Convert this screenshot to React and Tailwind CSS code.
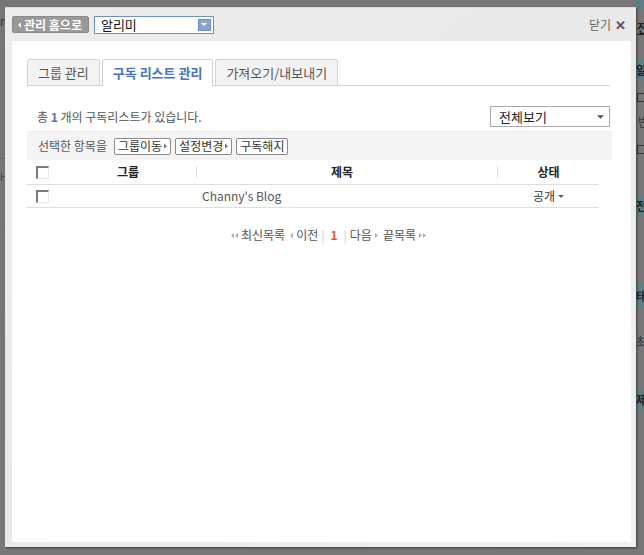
import React from 'react'

const font = { fontFamily: '"Noto Sans CJK KR", "Noto Sans", sans-serif' }

function Tri({ dir = 'right', className = '' }) {
  // tiny arrow used in buttons and pagination
  const d = dir === 'right' ? 'M0 0 L4 3.5 L0 7 Z' : dir === 'left' ? 'M4 0 L0 3.5 L4 7 Z' : 'M0 0 L8 0 L4 4 Z'
  const vb = dir === 'down' ? '0 0 8 4' : '0 0 4 7'
  return (
    <svg viewBox={vb} className={className} fill="currentColor">
      <path d={d} />
    </svg>
  )
}

function Check() {
  return <span className="inline-block w-[13px] h-[13px] border border-t-[#7a7a7a] border-l-[#7a7a7a] border-r-[#e6e6e6] border-b-[#e6e6e6] border-t-2 border-l-2 bg-white" />
}

function Backdrop() {
  // page beneath the overlay, only a sliver shows
  return (
    <>
      <div className="absolute left-0 top-[12px] w-[5px] overflow-hidden text-[12px] text-[#333]">n</div>
      <div className="absolute left-0 top-[158px] w-[5px] border-t border-dotted border-[#555]" />
      <div className="absolute left-0 top-[168px] w-[5px] overflow-hidden text-[11px] text-[#444]">H</div>
      <div className="absolute right-0 top-0 w-[8px] h-[10px] bg-[#5e7e84]" />
      <div className="absolute left-[637px] top-[19px] w-[7px] overflow-hidden text-[12px] font-bold text-[#222] underline">전</div>
      <div className="absolute right-0 top-[59px] w-[8px] h-[21px] overflow-hidden bg-[#5e7e84] text-[12px] font-bold text-[#222] leading-[21px]">알</div>
      <div className="absolute left-[637px] top-[93px] w-[8px] h-[9px] border border-[#333]" />
      <div className="absolute left-[638px] top-[113px] w-[6px] overflow-hidden text-[12px] text-[#333]">반</div>
      <div className="absolute left-[637px] top-[145px] w-[8px] h-[9px] border border-[#333]" />
      <div className="absolute right-0 top-[195px] w-[8px] h-[21px] overflow-hidden bg-[#5e7e84] text-[12px] font-bold text-[#222] leading-[21px]">전</div>
      <div className="absolute right-0 top-[284px] w-[8px] h-[24px] overflow-hidden bg-[#5e7e84] text-[12px] font-bold text-[#222] leading-[24px]">테</div>
      <div className="absolute left-[636px] top-[333px] w-[8px] overflow-hidden text-[12px] text-[#333]">최</div>
      <div className="absolute right-0 top-[389px] w-[8px] h-[22px] overflow-hidden bg-[#5e7e84] text-[12px] font-bold text-[#222] leading-[22px]">제</div>
    </>
  )
}

export default function App() {
  return (
    <div style={font} className="relative w-[644px] h-[555px] bg-[#777] overflow-hidden pl-[5px] pt-[7px]">
      <Backdrop />
      <div className="relative w-[631px] h-[540px] flex flex-col bg-gradient-to-br from-[#ececec] via-[#e9e9e9] to-[#f1f1f1] shadow-[1px_1px_2px_rgba(0,0,0,0.5)] border-t border-[#dcdcdc]">
        {/* header */}
        <div className="h-[33px] flex items-center justify-between pl-[7px] pr-[10px]">
          <div className="flex items-center gap-[5px]">
            <button className="h-[17px] pl-[5px] pr-[6px] rounded-[2px] bg-[#999] border border-[#8a8a8a] text-white font-bold text-[12px] leading-none flex items-center gap-[3px]">
              <Tri dir="left" className="w-[3px] h-[6px]" />
              <span>관리 홈으로</span>
            </button>
            <div className="w-[120px] h-[18px] bg-white border border-[#6f8fc7] flex items-center justify-between pl-[6px] pr-[2px]">
              <span className="text-[13px] text-[#111] leading-none">알리미</span>
              <span className="w-[13px] h-[12px] bg-[#8ba3d3] border border-[#6f8fc7] flex items-center justify-center text-white">
                <Tri dir="down" className="w-[6px] h-[3px]" />
              </span>
            </div>
          </div>
          <div className="flex items-center gap-[4px] text-[12px] text-[#666]">
            <span>닫기</span>
            <span className="font-bold text-[13px] text-[#555] leading-none">✕</span>
          </div>
        </div>

        {/* content */}
        <div className="flex-1 ml-[7px] mr-[5px] mb-[5px] bg-white pl-[15px] pr-[21px] pt-[18px] text-[12px] text-[#555]">
          {/* tabs */}
          <div className="flex items-end gap-[2px] border-b border-[#d3d3d3] h-[27px]">
            <div className="h-[26px] px-[10px] flex items-center bg-[#f3f3f3] border border-b-0 border-[#d3d3d3] rounded-t-[3px] text-[13px] text-[#555]">그룹 관리</div>
            <div className="h-[27px] -mb-px px-[10px] flex items-center bg-white border border-b-0 border-[#d3d3d3] rounded-t-[3px] text-[13px] font-bold text-[#4a74bb]">구독 리스트 관리</div>
            <div className="h-[26px] px-[10px] flex items-center bg-[#f3f3f3] border border-b-0 border-[#d3d3d3] rounded-t-[3px] text-[13px] text-[#555]">가져오기/내보내기</div>
          </div>

          {/* count + filter */}
          <div className="flex items-center justify-between h-[45px] pt-[16px] pl-[10px]">
            <div className="text-[12px] text-[#555]">
              총 <b className="text-[#4a74bb]">1</b> 개의 구독리스트가 있습니다.
            </div>
            <div className="w-[120px] h-[21px] border border-[#aaa] flex items-center justify-between pl-[8px] pr-[5px]">
              <span className="text-[13px] text-[#222]">전체보기</span>
              <Tri dir="down" className="w-[7px] h-[4px] text-[#555]" />
            </div>
          </div>

          {/* action bar */}
          <div className="h-[29px] bg-[#f4f4f4] border-t border-[#ececec] flex items-center gap-[4px] pl-[11px] -mr-[2px]">
            <span className="mr-[3px] text-[12px] text-[#555]">선택한 항목을</span>
            <button className="h-[17px] px-[3px] bg-white border border-[#8a8a8a] rounded-[2px] text-[12px] text-[#333] flex items-center gap-[2px] leading-none">
              그룹이동<Tri className="w-[3px] h-[6px] text-[#777]" />
            </button>
            <button className="h-[17px] px-[3px] bg-white border border-[#8a8a8a] rounded-[2px] text-[12px] text-[#333] flex items-center gap-[2px] leading-none">
              설정변경<Tri className="w-[3px] h-[6px] text-[#777]" />
            </button>
            <button className="h-[17px] px-[3px] bg-white border border-[#8a8a8a] rounded-[2px] text-[12px] text-[#333] flex items-center leading-none">
              구독해지
            </button>
          </div>

          {/* table */}
          <div className="w-[572px]">
            <div className="grid grid-cols-[33px_136px_302px_101px] h-[25px] items-center border-b border-[#dedede]">
              <div className="pl-[9px] flex items-center"><Check /></div>
              <div className="text-center font-bold text-[12px] text-[#222]">그룹</div>
              <div className="relative text-center font-bold text-[12px] text-[#222] border-l border-r border-[#ddd] h-[12px] leading-[12px] pr-[10px]">제목</div>
              <div className="text-center font-bold text-[12px] text-[#222]">상태</div>
            </div>
            <div className="grid grid-cols-[33px_136px_302px_101px] h-[23px] items-center border-b border-[#dedede]">
              <div className="pl-[9px] flex items-center"><Check /></div>
              <div />
              <div className="pl-[6px] text-[12px] text-[#555]">Channy's Blog</div>
              <div className="flex items-center justify-center gap-[3px] text-[12px] text-[#333]">
                공개<Tri dir="down" className="w-[6px] h-[3px] text-[#666]" />
              </div>
            </div>
          </div>

          {/* pagination */}
          <div className="flex items-center justify-center pl-[20px] mt-[18px] text-[12px] text-[#555] gap-[3px]">
            <span className="flex items-center gap-[1px] text-[#aaa]">
              <Tri dir="left" className="w-[3px] h-[5px]" />
              <Tri dir="left" className="w-[3px] h-[5px]" />
            </span>
            <span>최신목록</span>
            <Tri dir="left" className="ml-[2px] w-[3px] h-[5px] text-[#aaa]" />
            <span>이전</span>
            <span className="text-[#ccc]">|</span>
            <span className="px-[3px] font-bold text-[#ee5a24]">1</span>
            <span className="text-[#ccc]">|</span>
            <span>다음</span>
            <Tri className="w-[3px] h-[5px] text-[#aaa]" />
            <span className="ml-[2px]">끝목록</span>
            <span className="flex items-center gap-[1px] text-[#aaa]">
              <Tri className="w-[3px] h-[5px]" />
              <Tri className="w-[3px] h-[5px]" />
            </span>
          </div>
        </div>
      </div>
    </div>
  )
}
